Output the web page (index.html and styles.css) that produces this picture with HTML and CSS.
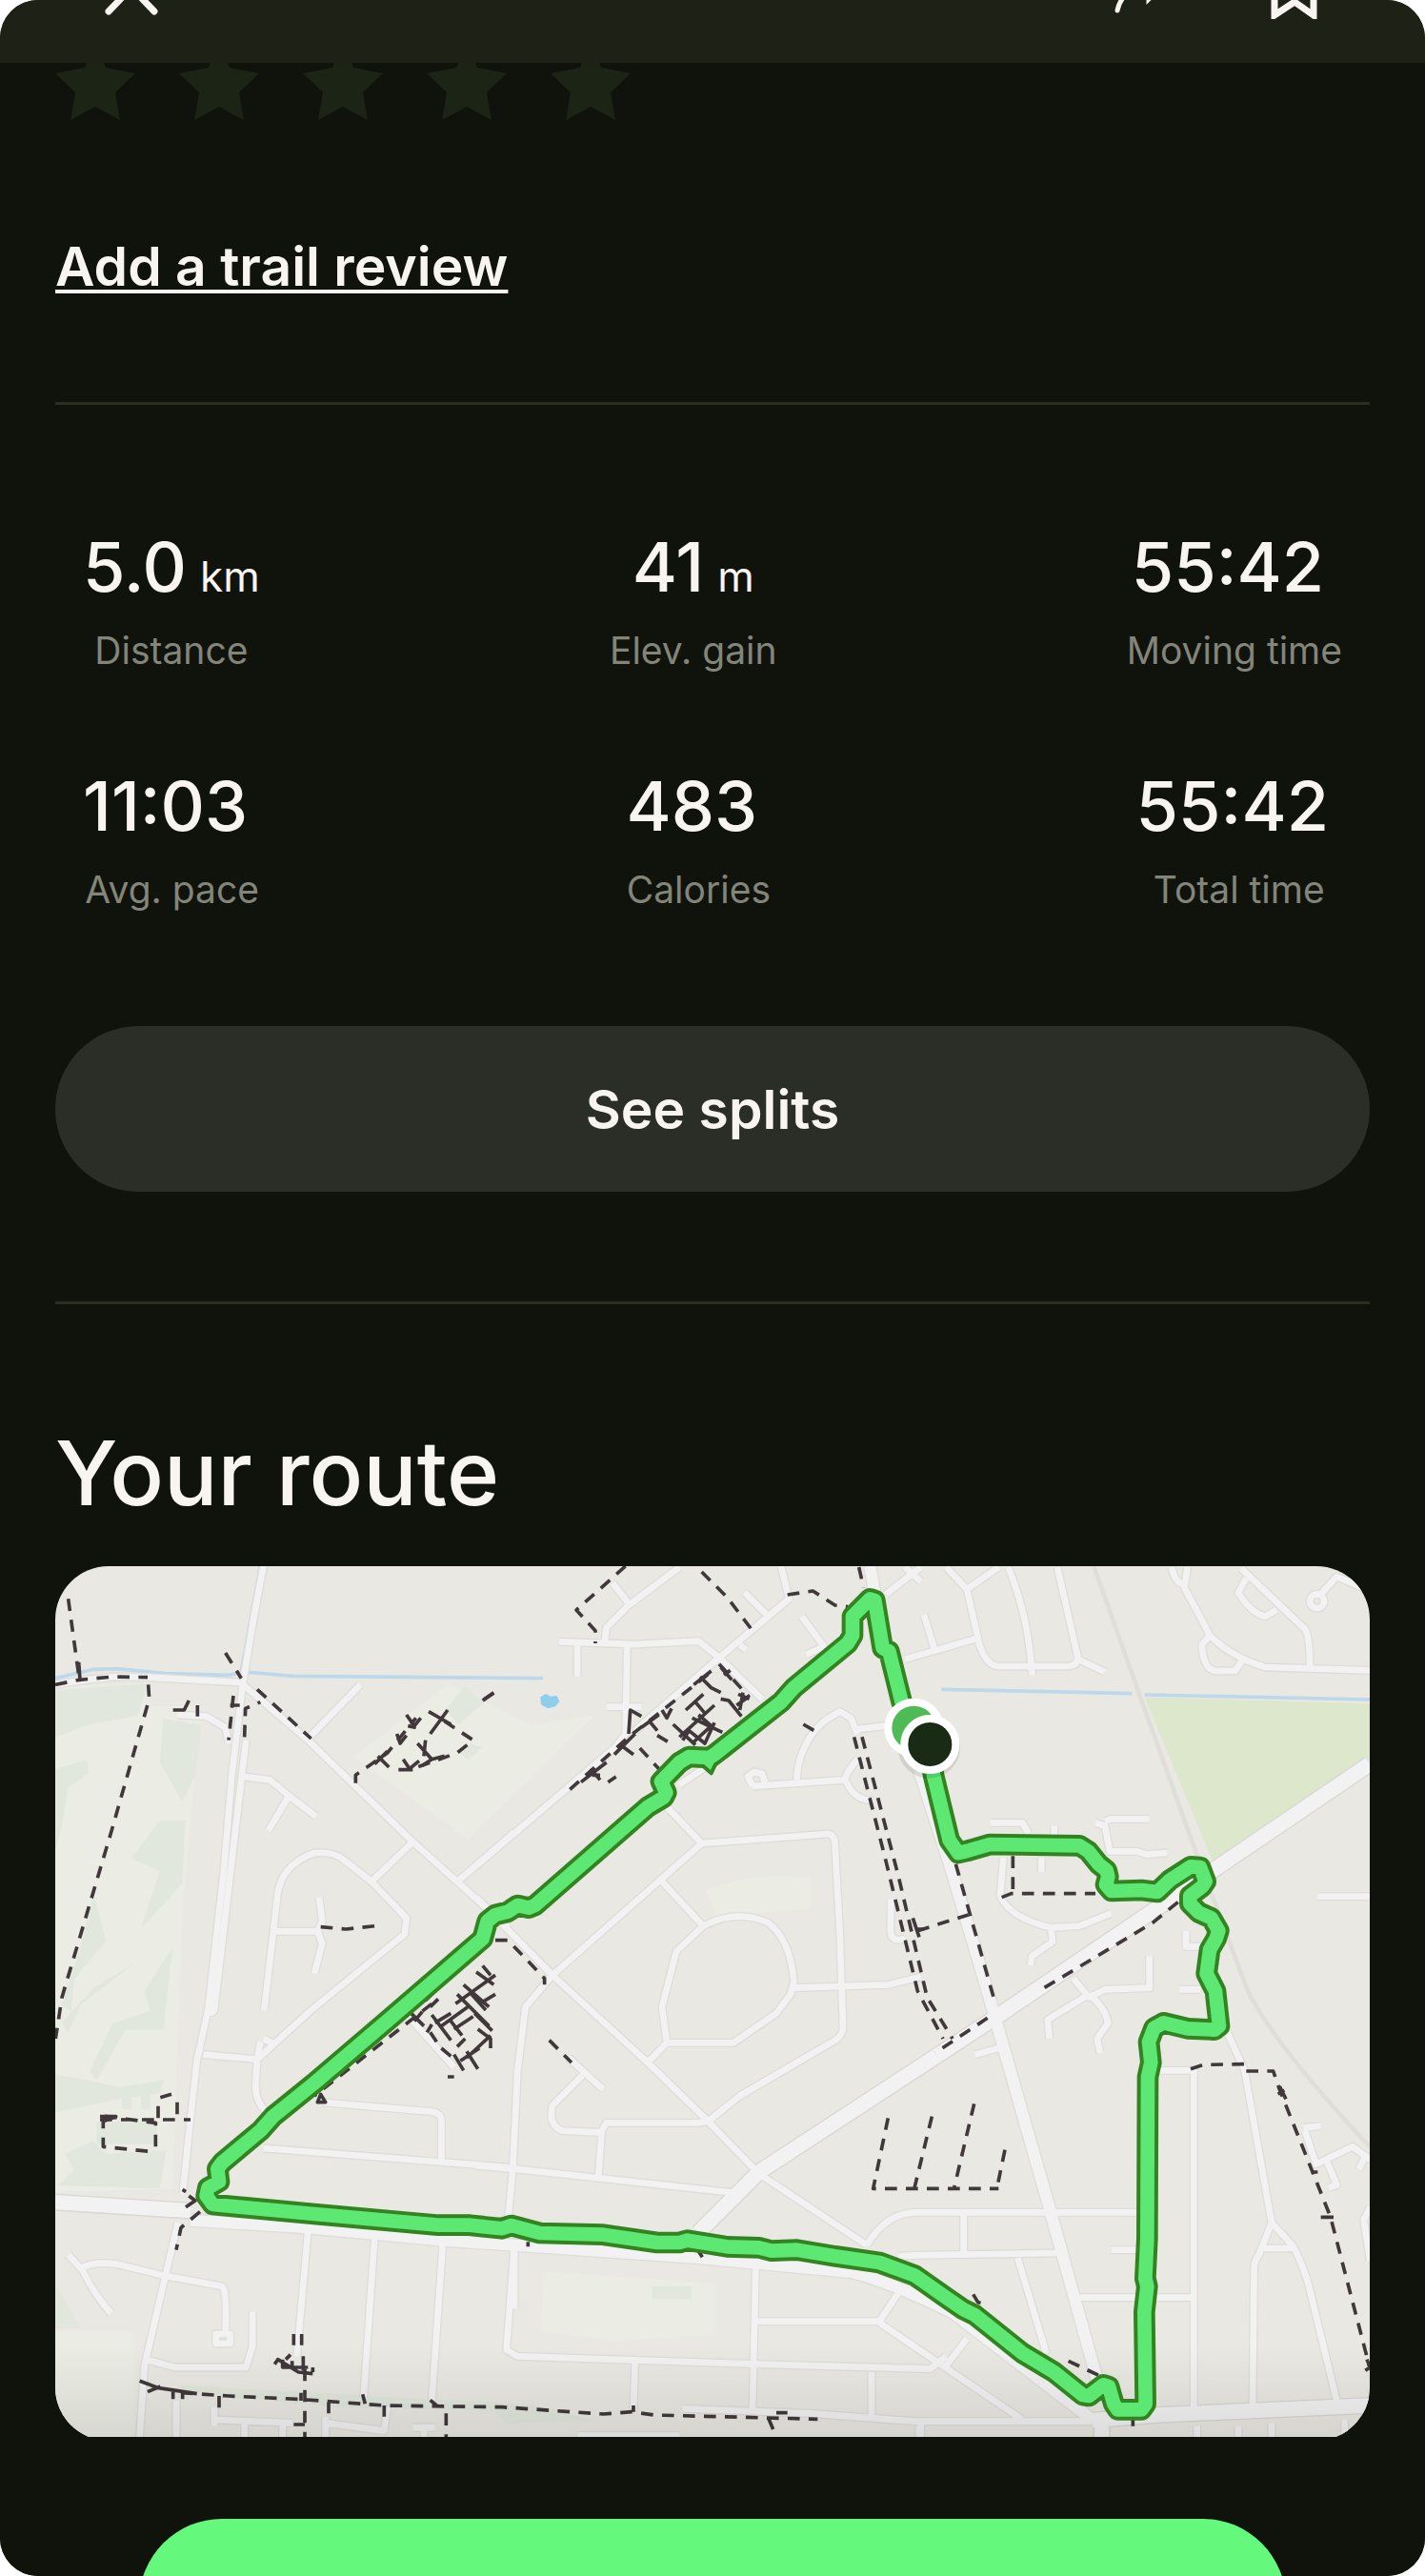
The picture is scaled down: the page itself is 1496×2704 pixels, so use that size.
FILE: index.html
```html
<!DOCTYPE html>
<html lang="en">
<head>
  <meta charset="UTF-8">
  <meta name="viewport" content="width=device-width, initial-scale=1">
  <title>Your route</title>
  <link rel="stylesheet" href="styles.css">
</head>
<body>
  <div class="screen">
    <header class="topbar">
      <button class="icon-btn" aria-label="Close">
        <svg viewBox="0 0 60 60"><path d="M6 2L54 52M54 2L6 52"/></svg>
      </button>
      <div class="topbar-actions">
        <button class="icon-btn" aria-label="Share">
          <svg viewBox="0 0 60 60"><path class="thin" d="M7 51C10 36 20 28 40 27V39L57 22 40 6V18"/></svg>
        </button>
        <button class="icon-btn" aria-label="Save">
          <svg viewBox="0 0 60 60"><path d="M10 4H51V56L31 42 10 56Z"/></svg>
        </button>
      </div>
    </header>

    <main class="content">
      <div class="rating">
        <button class="star" aria-label="1 star"><svg viewBox="0 0 84 84"><path d="M42 0L53 27 84 33 63 53 68 82 42 68 16 82 21 53 0 33 31 27Z"/></svg></button>
        <button class="star" aria-label="2 stars"><svg viewBox="0 0 84 84"><path d="M42 0L53 27 84 33 63 53 68 82 42 68 16 82 21 53 0 33 31 27Z"/></svg></button>
        <button class="star" aria-label="3 stars"><svg viewBox="0 0 84 84"><path d="M42 0L53 27 84 33 63 53 68 82 42 68 16 82 21 53 0 33 31 27Z"/></svg></button>
        <button class="star" aria-label="4 stars"><svg viewBox="0 0 84 84"><path d="M42 0L53 27 84 33 63 53 68 82 42 68 16 82 21 53 0 33 31 27Z"/></svg></button>
        <button class="star" aria-label="5 stars"><svg viewBox="0 0 84 84"><path d="M42 0L53 27 84 33 63 53 68 82 42 68 16 82 21 53 0 33 31 27Z"/></svg></button>
      </div>

      <a class="review-link" href="#">Add a trail review</a>

      <hr class="divider">

      <section class="stats">
        <div class="stats-row">
          <div class="stat">
            <div class="stat-value">5.0<span class="unit">km</span></div>
            <div class="stat-label">Distance</div>
          </div>
          <div class="stat">
            <div class="stat-value">41<span class="unit">m</span></div>
            <div class="stat-label">Elev. gain</div>
          </div>
          <div class="stat">
            <div class="stat-value">55:42<span class="unit"></span></div>
            <div class="stat-label">Moving time</div>
          </div>
        </div>
        <div class="stats-row">
          <div class="stat">
            <div class="stat-value">11:03<span class="unit"></span></div>
            <div class="stat-label">Avg. pace</div>
          </div>
          <div class="stat">
            <div class="stat-value">483<span class="unit"></span></div>
            <div class="stat-label">Calories</div>
          </div>
          <div class="stat">
            <div class="stat-value">55:42<span class="unit"></span></div>
            <div class="stat-label">Total time</div>
          </div>
        </div>
      </section>

      <button class="splits-btn">See splits</button>

      <hr class="divider">

      <h2 class="route-title">Your route</h2>

      <svg class="map" viewBox="0 0 4140 2754" role="img" aria-label="Map of your route">
        <defs>
          <!-- side streets, drawn twice: casing and fill -->
          <g id="streets">
            <g transform="translate(-54 -42)">
              <path d="M54 415L150 400 240 390 345 392 635 408M712 30L680 200 645 410 610 700 585 1000 535 1440 500 1600 480 1780 455 2020M655 590L630 800 555 1440Q550 1450 530 1450"/>
              <path d="M640 410L850 590 1180 910 1480 1180M855 580L1015 415M650 705L730 715 790 765 875 830M790 765L725 875M1180 910L1050 1035"/>
              <path d="M712 1440L740 1200 755 1070Q770 980 870 945 930 940 960 965L1050 1035 1160 1150 1155 1200 860 1440 690 1595"/>
              <path d="M740 1192H880L895 1160 885 1085M880 1192L895 1230 870 1325M1315 1040L1500 880M440 510L530 515 590 550 600 600"/>
            </g>
            <g transform="translate(1326 -42)">
              <path d="M0 985L440 610 470 570 475 290M260 280L500 288 700 278 765 330 900 460M318 290V390M410 485H520M405 275L410 235 480 165 640 45M430 95L480 160"/>
              <path d="M500 560L765 330 985 145 960 42M845 125L915 195M830 290L850 305M1025 200L1095 295 1040 320M1290 130L1400 45M1410 195L1445 310M1350 335L1575 270"/>
              <path d="M1200 555L1290 545M1010 715C1010 640 1050 560 1110 520L1145 500 1180 520 1200 570M870 735L1160 715 1170 690 1200 650M1165 720Q1190 780 1250 780M870 735L855 705 875 690 900 695 910 725"/>
              <path d="M640 730L760 650M600 800L710 915 1110 885Q1130 890 1130 920L1145 1200 1155 1490Q1155 1520 1130 1535L830 1710 730 1790"/>
              <path d="M710 915L240 1330 155 1430 130 1630 115 1940 100 2100M120 2180L95 2510 130 2530 880 2555 1430 2570 1480 2530"/>
              <path d="M0 1085L240 1330 540 1605 730 1790 890 1955 1230 2180M585 1035L715 1175Q820 1120 920 1165 990 1220 1000 1350L990 1390 945 1450 810 1543H600L585 1430 630 1255 715 1175M600 1543L540 1605M1000 1370L1300 1360 1400 1335M1350 1215Q1300 1230 1305 1180V1090"/>
            </g>
            <g transform="translate(2706 -42)">
              <path d="M100 45L165 115 265 45M165 115L205 290Q225 350 260 357H480Q515 355 515 330L450 45M295 45Q360 200 370 385M515 335L600 375M-30 45L20 90"/>
              <path d="M810 45Q820 95 850 100M860 45L850 110Q900 200 930 260 1000 330 1105 360L1435 370M930 260L905 290Q910 370 950 372H1010L1035 335M1030 50L1230 240Q1245 260 1245 360M1045 80L1020 125Q1060 190 1105 200L1140 180M1280 130L1330 75 1435 120"/>
              <circle cx="1268" cy="152" r="22"/>
              <path d="M240 850H340L360 885M440 860V890M570 850L600 860 615 940H700L730 950 795 945M600 845L620 838H740M280 960L270 1080Q300 1150 430 1180L520 1175 620 1135M430 1180L435 1225 370 1270 365 1300M400 960V1005"/>
              <path d="M740 1270V1370L600 1375 550 1400 500 1340M550 1390L420 1470 425 1530M550 1390Q600 1430 610 1480L575 1530 585 1575M855 1190V1240H900M835 1375H900M1270 1082H1435M190 1580L265 1560"/>
            </g>
            <g transform="translate(-54 1338)">
              <path d="M520 200L690 215 700 160M690 215L685 300Q685 350 720 380M710 150L750 170M890 350L1240 380Q1275 385 1270 420V530M710 495L1480 555M440 730L335 1180 320 1405"/>
              <path d="M95 830L140 880Q180 960 230 1015M140 870Q180 850 250 860L390 895 580 930Q595 950 590 1070M560 1080H605V1110H560ZM340 1160L430 1185H655L675 1120V1010"/>
              <path d="M850 755L815 1150M1060 775L1025 1280M1275 790L1240 1290M1180 95L1310 240M435 1290V1405M560 1350L800 1360M555 1310V1370M650 1350V1420M770 1360V1420M905 1340V1420M905 1360L1090 1385 1100 1310M1180 1375H1250M1215 1375V1420"/>
            </g>
            <g transform="translate(1326 1338)">
              <path d="M0 550L120 560 810 635M290 210L400 310M335 265L240 360Q225 420 270 440L385 445M385 580L395 440 410 415H700L730 410M880 870L870 1320M885 1040H1270L1330 950M1270 1045L1720 1350M1245 1200V1340M500 1170L495 1320M320 1400H640"/>
              <path d="M650 1315L1050 1330 1380 1355H1940M1400 1360V1410M1230 800Q1290 700 1380 697H2080M1330 835L1380 832 1840 825M1480 1180L1545 1095M120 800V1000"/>
            </g>
            <g transform="translate(2706 1338)">
              <path d="M770 250H880V1310M985 130L1040 250 1125 730 1085 830Q1070 850 1070 870L1065 1310M1125 730L1190 800Q1215 840 1240 920L1330 1290M1100 810H1190M155 700V825M325 840L415 1140M620 815H700M520 965H880"/>
              <path d="M1225 430L1280 425M1230 440L1265 545 1380 490 1435 530M1400 560L1420 520M1300 540L1330 610 1305 620M1435 680L1415 720 1435 850M15 1370V1420M890 1370V1420M1020 1370V1420M1125 1360V1420M1355 1350V1420"/>
            </g>
          </g>
          <g id="avenues">
            <path d="M2566 0L2580 80M2720 640L2826 968 2936 1338 3136 2038 3286 2578"/>
            <path d="M426 2060L796 2083 1226 2123 2026 2178 2506 2223Q2620 2250 2826 2350L3266 2688"/>
          </g>
          <g id="highways">
            <path d="M4140 623L3646 958 2966 1418 2216 1908 2026 2098"/>
            <path d="M0 2003L426 2030M3266 2690L3466 2673 4140 2643M3296 2710V2760"/>
          </g>
          <linearGradient id="fade" x1="0" y1="0" x2="0" y2="1">
            <stop offset="0" stop-color="#000" stop-opacity="0"/>
            <stop offset="1" stop-color="#000" stop-opacity=".09"/>
          </linearGradient>
        </defs>

        <rect class="land" width="4140" height="2754"/>

        <!-- parks -->
        <g class="grass-light">
          <path d="M0 380L290 370 300 440H460L400 1100 370 1960 0 1970Z"/>
          <path d="M940 600L1240 370 1500 500 1700 470 1300 860Z"/>
          <path d="M0 2410H250V2754H0Z"/>
          <path d="M1540 2220L2080 2260V2420L1760 2440 1530 2410Z"/>
          <path d="M2050 1020Q2200 960 2380 980V1080L2080 1100Z"/>
        </g>
        <g class="grass">
          <path d="M0 390L290 370 260 470 100 500 0 540Z"/>
          <path d="M340 480L460 500 440 660 400 740 330 620Z"/>
          <path d="M0 640L100 610 105 650 40 700 20 820 0 900Z"/>
          <path d="M410 800L400 1000 270 1140 330 960 240 920 330 800Z"/>
          <path d="M120 1030L160 1180 60 1300 50 1400 20 1380 80 1200Z"/>
          <path d="M370 1200L340 1460 220 1460 130 1620 110 1590 180 1440 300 1400 280 1340Z"/>
          <path d="M250 1250L80 1380 40 1470 20 1440 120 1330Z"/>
          <path d="M60 1610L200 1640 340 1620 330 1660 190 1680 0 1720V1600Z"/>
          <path d="M130 1750H320V1820H130ZM210 1650H240V1710H210ZM270 1650H300V1710H270Z"/>
          <path d="M30 1850L120 1810 160 1850 350 1840 330 1960 10 1950 60 1900Z"/>
          <path d="M0 2260L80 2400H0Z"/>
          <path d="M1290 380L1350 430 1270 500 1230 450ZM1310 560L1345 570 1300 610 1280 590Z"/>
          <path d="M1880 2268H2004V2308H1880Z"/>
          <path d="M400 2580L1500 2640 1700 2690 1420 2700 1380 2660 900 2650 380 2600Z"/>
        </g>
        <path class="field" d="M3431 413L4140 433V608L3651 943Z"/>

        <!-- water -->
        <g class="water">
          <path d="M0 353L120 325 196 323 346 338 546 343 596 333 746 346 1536 353M646 0L586 330"/>
          <path d="M2791 388L3391 401M3431 405L4140 420"/>
        </g>
        <path class="pond" d="M1528 412L1545 402 1560 410 1580 408 1588 426 1575 442 1552 448 1530 436Z"/>

        <path class="rail" d="M3271 0L3416 408 3606 938 3756 1338Q3850 1520 4140 1828"/>

        <use class="street-casing" href="#streets"/>
        <use class="avenue-casing" href="#avenues"/>
        <use class="highway-casing" href="#highways"/>
        <use class="street" href="#streets"/>
        <use class="avenue" href="#avenues"/>
        <use class="highway" href="#highways"/>

        <!-- footpaths -->
        <g class="footpath">
          <g transform="translate(-54 -42)">
            <path d="M95 145L130 400M54 415L130 400 240 390 345 392M347 415L350 460 230 880 75 1400 55 1530M590 315L640 395M615 450L600 590M650 580L653 490 700 470M690 430L860 585M890 1178L970 1185 1060 1175M1435 440L1400 465"/>
            <path d="M1000 725V700L1100 630 1190 520M1280 530L1370 590 1320 630 1180 680"/>
          </g>
          <g transform="translate(1326 -42)">
            <path d="M470 42L315 180 375 245V285M710 60L790 140 870 245M980 132L1060 120 1130 165 1170 170M1205 45L1220 110M295 745L480 580 740 375M765 350L860 455M515 615L575 680M570 575L620 605M1030 540L1065 560M415 722L440 705"/>
            <path d="M1190 580L1290 970 1390 1380 1470 1530M1215 580L1330 1020 1420 1400 1500 1530M1390 1190L1550 1140M60 1220H100L215 1340V1360M230 1535L300 1605"/>
          </g>
          <g transform="translate(2706 -42)">
            <path d="M130 980L255 1420M310 955V1070M275 1085L305 1073H570M830 1100L750 1165 400 1375M230 1465L65 1575"/>
          </g>
          <g transform="translate(2706 1338)">
            <path d="M870 245L910 232 1040 230M1045 252H1130L1150 310 1310 710 1435 1190M188 355L125 620M285 500L260 620M55 395L0 620M-83 400L-130 622H265M485 1165L580 1210M688 1340V1370M185 955L200 980 222 985"/>
          </g>
          <g transform="translate(-54 1338)">
            <path d="M205 395V490L350 505M370 490V415L195 392M195 405H480M378 400V360M385 335L420 325M438 350V400M510 695L450 745 435 815M1240 40L870 330"/>
            <path d="M450 1265L600 1275 820 1285 1090 1305 1460 1310 1780 1332 1870 1325 1940 1335 2455 1348M840 1190V1405M1285 1330V1405"/>
          </g>
        </g>
        <g class="footpath solid">
          <g transform="translate(-54 -42)">
            <path d="M425 495H460L475 465M502 480V515M605 480H635M128 345L132 400M1160 510L1185 545 1205 520M1165 545L1190 550M1230 500L1300 540M1290 495L1235 570M1130 570L1140 600 1160 575M1100 625L1060 665M1070 640L1105 675M1195 600L1240 650 1280 640M1220 590L1215 640M1150 650L1170 680 1200 655M1135 683H1180M1210 670L1240 650"/>
          </g>
          <g transform="translate(1326 -42)">
            <path d="M480 570L485 495 520 515M435 635L500 570M455 605L495 635M330 722L410 660M360 680L390 715M365 700H390M520 550L575 510M545 530L570 560M585 495L600 520 615 490M685 415L740 372M705 390L740 425 770 440M770 360L805 400M780 385L800 370M660 495L715 445M690 470L720 505M640 580L750 480M620 540L690 605M680 520L775 565M650 590L670 560 720 600 750 535M700 510L740 545 680 600M770 460L795 465 835 515M820 480L855 455M825 445L860 460M840 440L830 495M20 465L55 442M1375 1150L1395 1210M1385 1185H1410"/>
          </g>
          <g transform="translate(-54 1338)">
            <path d="M1175 70L1215 110M1185 95L1210 65M1235 50L1260 25M1220 30L1250 0M1240 75L1300 155M1250 100L1300 70M1235 130L1255 160M1225 130L1240 105M1270 110L1360 45M1300 95L1335 140M1310 120L1370 80M1320 10L1420 110M1315 40L1440 -50M1340 -20L1420 50M1380 -60L1435 -20M1400 -80L1425 -50M1375 70L1430 125M1350 210L1425 140M1385 120L1425 150V180M1350 190L1385 245M1310 200L1340 250M1330 220L1390 180M1270 180L1300 205M1320 175L1345 150M1365 10L1410 60M1390 40L1440 10M1290 270H1310M880 350L890 325 905 350Z"/>
            <path d="M745 1175L755 1160 820 1200 865 1205M770 1160V1185H850M780 1160L795 1145M835 1150V1195M800 1165V1190M865 1185V1200M805 1080V1115M830 1080V1115M320 1228L380 1250 500 1268M345 1262L385 1245M425 1255V1285M455 1260V1285M570 1275V1312M828 1265V1290M915 1295V1330M1022 1270L1030 1300M1090 1305V1340M1235 1288L1255 1305M455 625L465 632M475 645L495 660 465 680M805 1365H840M195 395H245L205 410"/>
          </g>
          <g transform="translate(1326 1338)">
            <path d="M495 1305V1325M920 1345L935 1380M945 1328H980M163 790V805M700 820L712 838"/>
          </g>
          <g transform="translate(2706 1338)">
            <path d="M1150 300L1170 340M1145 325L1165 312M1250 570H1270M1280 712H1320M1425 1160L1435 1185 1420 1195"/>
          </g>
        </g>

        <rect y="2450" width="4140" height="304" fill="url(#fade)"/>

        <defs>
          <path id="track" d="M2752 561L2766 658 2816 863 2844 903 2871 897 2944 876 3226 880 3254 898 3286 938 3311 958 3316 978 3309 1003 3326 1023 3421 1020 3471 1026 3511 988 3576 946 3606 948 3623 993 3611 1010 3574 1038V1063L3601 1090 3641 1108 3664 1148 3656 1173 3636 1208 3626 1283 3654 1338 3666 1448 3651 1460 3566 1456 3491 1438 3461 1454 3444 1498 3451 1563 3441 1608 3439 2118 3433 2243 3439 2268 3430 2348 3434 2638 3421 2656H3346L3334 2638 3318 2583 3301 2578 3256 2613 3236 2610 3146 2538 3046 2478 2896 2358 2856 2338 2806 2303 2706 2233 2596 2193 2456 2173 2336 2153 2256 2156 2216 2146 2116 2143 1991 2123 1966 2130H1896L1726 2105 1526 2100 1436 2076 1406 2086 1306 2075H1206L816 2040 496 2010 476 1983 481 1958 516 1938 511 1898 526 1878 646 1778 686 1733 816 1628 1056 1423 1346 1173 1361 1118 1386 1098 1426 1088 1456 1068 1491 1076 1511 1068 1866 758 1916 728 1924 713 1908 678 1966 618 1996 600 2061 603 2076 593 2286 428 2326 383 2496 243 2511 218V158L2566 103 2581 108 2606 258 2626 268 2666 428 2706 511"/>
        </defs>
        <use class="track-edge" href="#track"/>
        <path class="track-spur" d="M2030 620L2066 652 2095 590Z"/>
        <use class="track" href="#track"/>

        <circle class="pin-shadow" cx="2752" cy="570" r="98"/>
        <circle class="pin-start" cx="2704" cy="509" r="81"/>
        <circle class="pin-end" cx="2755" cy="561" r="81"/>
      </svg>
    </main>

    <footer class="bottom-bar">
      <button class="primary-btn" aria-label="Continue"></button>
    </footer>
  </div>
</body>
</html>
```
FILE: styles.css
```css
* {
  box-sizing: border-box;
}

body {
  margin: 0;
  background: #fff;
  font-family: Inter, "Liberation Sans", sans-serif;
  color: #f8f4f0;
}

button {
  border: none;
  padding: 0;
  background: none;
  font-family: inherit;
  color: inherit;
  cursor: pointer;
}

svg {
  display: block;
}

.screen {
  background: #10130c;
  border-radius: 40px;
  overflow: hidden;
}

/* top bar */
.topbar {
  position: relative;
  z-index: 1;
  display: flex;
  justify-content: space-between;
  align-items: flex-start;
  height: 66px;
  padding: 0 108px;
  overflow: hidden;
  background: #1e2115;
}

.topbar-actions {
  display: flex;
  gap: 102px;
}

.icon-btn {
  width: 60px;
  height: 60px;
  margin-top: -40px;
}

.icon-btn path {
  fill: none;
  stroke: #f8f4f0;
  stroke-width: 7;
  stroke-linecap: round;
}

.icon-btn .thin {
  stroke-width: 5;
}

/* content */
.content {
  padding: 0 58px;
}

.rating {
  display: flex;
  gap: 46px;
  margin-top: -22px;
}

.star {
  width: 84px;
  height: 84px;
}

.star path {
  fill: #1c2415;
}

.review-link {
  display: block;
  width: fit-content;
  margin-top: 116px;
  font-size: 57px;
  line-height: 72px;
  font-weight: 600;
  color: inherit;
  text-decoration-thickness: 4px;
  text-underline-offset: 4px;
  text-decoration-skip-ink: none;
}

.divider {
  height: 3px;
  margin: 106px 0 0;
  border: none;
  background: #293022;
}

.stats {
  display: flex;
  flex-direction: column;
  gap: 99px;
  padding: 130px 29px 0;
}

.stats-row {
  display: flex;
  justify-content: space-between;
}

.stat {
  display: flex;
  flex-direction: column;
  align-items: center;
  gap: 24px;
}

.stat-value {
  display: flex;
  align-items: baseline;
  gap: 14px;
  font-size: 72px;
  line-height: 80px;
  font-weight: 500;
}

.unit {
  font-size: 44px;
  line-height: 44px;
  font-weight: 400;
}

.stat-label {
  font-size: 39px;
  line-height: 48px;
  color: #83857a;
}

.splits-btn {
  display: block;
  width: 100%;
  height: 174px;
  margin: 119px 0 115px;
  border-radius: 87px;
  background: #2b2d27;
  font-size: 57px;
  font-weight: 600;
}

.splits-btn + .divider {
  margin-top: 0;
}

.route-title {
  margin: 129px 0 50px;
  font-size: 94px;
  line-height: 96px;
  font-weight: 500;
}

/* map */
.map {
  width: 100%;
  margin-bottom: -4px;
  border-radius: 56px;
  fill: none;
  stroke-linejoin: round;
}

.land { fill: #e9e8e2; }
.grass-light { fill: #ebece4; }
.grass { fill: #e1e7dc; }
.field { fill: #dce7cb; }
.pond { fill: #8fcdec; }

.water {
  stroke: #bdd8ea;
  stroke-width: 11;
}

.rail {
  stroke: #dfded9;
  stroke-width: 14;
}

.street-casing { stroke: #deddd9; stroke-width: 28; }
.avenue-casing { stroke: #deddd9; stroke-width: 44; }
.highway-casing { stroke: #d8d7d3; stroke-width: 54; }
.street { stroke: #f3f2f2; stroke-width: 20; }
.avenue { stroke: #f3f2f2; stroke-width: 36; }
.highway { stroke: #f3f2f2; stroke-width: 46; }

.footpath {
  stroke: #40383a;
  stroke-width: 11;
  stroke-dasharray: 38 28;
}

.solid {
  stroke-dasharray: none;
}

.track-edge {
  stroke: #338320;
  stroke-width: 68;
}

.track-spur {
  fill: #5ce873;
  stroke: #338320;
  stroke-width: 12;
}

.track {
  stroke: #5ce873;
  stroke-width: 44;
}

.pin-start,
.pin-end {
  stroke: #fff;
  stroke-width: 24;
}

.pin-start { fill: #4fbb55; }
.pin-end { fill: #192b14; }

.pin-shadow {
  fill: #000;
  opacity: .1;
}

/* bottom bar */
.bottom-bar {
  position: relative;
  height: 146px;
  padding: 86px 146px 0;
  overflow: hidden;
  background: #10130c;
}

.primary-btn {
  display: block;
  width: 100%;
  height: 174px;
  border-radius: 87px;
  background: #64f97c;
}
```
